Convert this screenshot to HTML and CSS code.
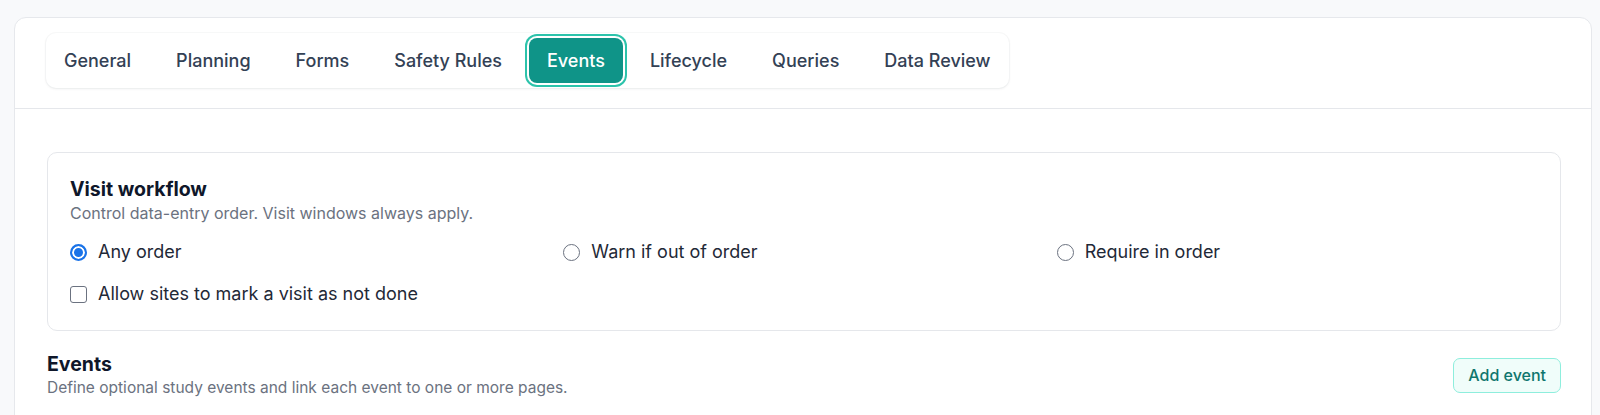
FILE: index.html
```html
<!DOCTYPE html>
<html lang="en">
<head>
<meta charset="utf-8">
<title>Study settings</title>
<link rel="stylesheet" href="styles.css">
</head>
<body>
<div class="page">
  <section class="card">
    <header class="card-head">
      <nav class="tabs">
        <button class="tab">General</button>
        <button class="tab">Planning</button>
        <button class="tab">Forms</button>
        <button class="tab">Safety Rules</button>
        <button class="tab active">Events</button>
        <button class="tab">Lifecycle</button>
        <button class="tab">Queries</button>
        <button class="tab">Data Review</button>
      </nav>
    </header>
    <div class="card-body">
      <div class="panel">
        <h2 class="title">Visit workflow</h2>
        <p class="sub">Control data-entry order. Visit windows always apply.</p>
        <div class="options">
          <label class="opt"><span class="radio checked"></span><span>Any order</span></label>
          <label class="opt"><span class="radio"></span><span>Warn if out of order</span></label>
          <label class="opt"><span class="radio"></span><span>Require in order</span></label>
        </div>
        <label class="opt check-row"><span class="checkbox"></span><span>Allow sites to mark a visit as not done</span></label>
      </div>
      <div class="section-head">
        <div>
          <h2 class="title">Events</h2>
          <p class="sub sub-sm">Define optional study events and link each event to one or more pages.</p>
        </div>
        <button class="add-btn">Add event</button>
      </div>
    </div>
  </section>
</div>
</body>
</html>
```
FILE: styles.css
```css
* { box-sizing: border-box; }
html, body { margin: 0; padding: 0; }
body {
  background: #f8f9fb;
  font-family: "Inter", "Noto Sans", sans-serif;
  color: #1f2937;
  height: 415px;
  overflow: hidden;
}
.page { padding: 17px 8px 0 14px; }
.card {
  background: #fff;
  border: 1px solid #e6e8ec;
  border-radius: 12px;
  height: 420px;
}
.card-head {
  padding: 15px 31px 20px 31px;
  border-bottom: 1px solid #e5e7eb;
}
.tabs {
  display: inline-flex;
  gap: 9px;
  padding: 5px 0;
  background: #fff;
  border-radius: 10px;
  box-shadow: 0 1px 3px rgba(15, 23, 42, 0.07), 0 0 0 1px rgba(15, 23, 42, 0.025);
}
.tab {
  font-family: inherit;
  font-size: 18px;
  font-weight: 500;
  color: #334155;
  background: transparent;
  border: 0;
  height: 45px;
  padding: 0 18px;
  border-radius: 8px;
  cursor: pointer;
}
.tab.active {
  background: #0f9488;
  color: #fff;
  box-shadow: 0 0 0 2px #fff, 0 0 0 4px #2cc3ab;
}
.card-body { padding: 43px 30px 0 32px; }
.panel {
  border: 1px solid #e5e7eb;
  border-radius: 10px;
  padding: 24px 22px 24px 22px;
}
.title {
  margin: 0;
  font-size: 19.5px;
  line-height: 24px;
  font-weight: 700;
  color: #0f172a;
}
.sub {
  margin: 2px 0 0;
  font-size: 16px;
  line-height: 20px;
  color: #6b7280;
}
.sub-sm { font-size: 15.5px; }
.options {
  display: grid;
  grid-template-columns: repeat(3, 1fr);
  gap: 12px;
  margin-top: 17px;
}
.opt {
  display: flex;
  align-items: center;
  gap: 11px;
  font-size: 18px;
  line-height: 24px;
  color: #1f2937;
}
.check-row { margin-top: 18px; }
.radio {
  width: 17px;
  height: 17px;
  border-radius: 50%;
  border: 1.5px solid #6b7280;
  background: #fff;
  flex: none;
}
.radio.checked {
  border: 2px solid #1a73e8;
  background: #1a73e8;
  box-shadow: inset 0 0 0 2px #fff;
}
.checkbox {
  width: 17px;
  height: 17px;
  border-radius: 3px;
  border: 1.5px solid #6b7280;
  background: #fff;
  flex: none;
}
.section-head {
  display: flex;
  align-items: center;
  justify-content: space-between;
  margin-top: 21px;
}
.add-btn {
  font-family: inherit;
  font-size: 16px;
  font-weight: 500;
  color: #0f766e;
  background: #f0fdfa;
  border: 1px solid #8eeedd;
  border-radius: 7px;
  height: 35px;
  padding: 0 14px;
  cursor: pointer;
}
```
